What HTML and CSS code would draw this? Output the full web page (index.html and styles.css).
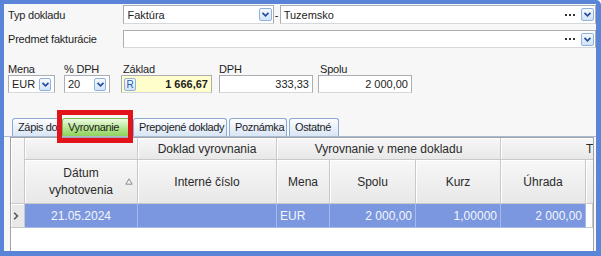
FILE: index.html
```html
<!DOCTYPE html>
<html lang="sk">
<head>
  <meta charset="UTF-8">
  <title>Doklad - Vyrovnanie</title>
  <link rel="stylesheet" href="styles.css">
</head>
<body>
  <div class="okno">
    <div class="riadok prvy">
      <span class="popis">Typ dokladu</span>
      <div class="pole typ">
        <span class="hodnota">Faktúra</span>
        <span class="rozbal"><svg width="9" height="7" viewBox="0 0 9 7"><path d="M1.5 1.8 L4.5 4.8 L7.5 1.8" fill="none" stroke="#22509e" stroke-width="1.7"/></svg></span>
      </div>
      <span class="pomlcka">-</span>
      <div class="pole miesto">
        <span class="hodnota">Tuzemsko</span>
        <span class="bodky"><i></i><i></i><i></i></span>
        <span class="rozbal"><svg width="9" height="7" viewBox="0 0 9 7"><path d="M1.5 1.8 L4.5 4.8 L7.5 1.8" fill="none" stroke="#22509e" stroke-width="1.7"/></svg></span>
      </div>
    </div>
    <div class="riadok druhy">
      <span class="popis">Predmet fakturácie</span>
      <div class="pole predmet">
        <span class="hodnota"></span>
        <span class="bodky"><i></i><i></i><i></i></span>
        <span class="rozbal"><svg width="9" height="7" viewBox="0 0 9 7"><path d="M1.5 1.8 L4.5 4.8 L7.5 1.8" fill="none" stroke="#22509e" stroke-width="1.7"/></svg></span>
      </div>
    </div>

    <div class="sumy">
      <div class="suma mena">
        <span class="nadpis">Mena</span>
        <div class="pole">
          <span class="hodnota">EUR</span>
          <span class="rozbal"><svg width="9" height="7" viewBox="0 0 9 7"><path d="M1.5 1.8 L4.5 4.8 L7.5 1.8" fill="none" stroke="#22509e" stroke-width="1.7"/></svg></span>
        </div>
      </div>
      <div class="suma sadzba">
        <span class="nadpis">% DPH</span>
        <div class="pole">
          <span class="hodnota">20</span>
          <span class="rozbal"><svg width="9" height="7" viewBox="0 0 9 7"><path d="M1.5 1.8 L4.5 4.8 L7.5 1.8" fill="none" stroke="#22509e" stroke-width="1.7"/></svg></span>
        </div>
      </div>
      <div class="suma zaklad">
        <span class="nadpis">Základ</span>
        <div class="pole zlte">
          <span class="tlacidlo-r">R</span>
          <span class="cislo tucne">1 666,67</span>
        </div>
      </div>
      <div class="suma dph">
        <span class="nadpis">DPH</span>
        <div class="pole"><span class="cislo">333,33</span></div>
      </div>
      <div class="suma spolu">
        <span class="nadpis">Spolu</span>
        <div class="pole"><span class="cislo">2 000,00</span></div>
      </div>
    </div>

    <div class="zalozky">
      <span class="zalozka z-zapis">Zápis do</span>
      <span class="zalozka z-vyr aktivna">Vyrovnanie</span>
      <span class="zalozka z-prep">Prepojené doklady</span>
      <span class="zalozka z-pozn">Poznámka</span>
      <span class="zalozka z-ost">Ostatné</span>
    </div>

    <div class="mriezka">
      <div class="bunka ind-hlav"></div>
      <div class="bunka pas"></div>
      <div class="bunka pas">Doklad vyrovnania</div>
      <div class="bunka pas pas-mena">Vyrovnanie v mene dokladu</div>
      <div class="bunka pas pas-dalsi">T</div>

      <div class="bunka stlpec datum">Dátum<br>vyhotovenia
        <svg class="zoradenie" width="8" height="7" viewBox="0 0 8 7"><path d="M4 0.8 L7.2 6.2 L0.8 6.2 Z" fill="none" stroke="#8c8c8c" stroke-width="1"/></svg>
      </div>
      <div class="bunka stlpec">Interné číslo</div>
      <div class="bunka stlpec">Mena</div>
      <div class="bunka stlpec">Spolu</div>
      <div class="bunka stlpec">Kurz</div>
      <div class="bunka stlpec">Úhrada</div>
      <div class="bunka stlpec kraj"></div>

      <div class="bunka ind-riadok"><svg width="6" height="8" viewBox="0 0 6 8"><path d="M1.2 0.8 L4.4 4 L1.2 7.2" fill="none" stroke="#555" stroke-width="1.6"/></svg></div>
      <div class="bunka data stred">21.05.2024</div>
      <div class="bunka data"></div>
      <div class="bunka data vlavo">EUR</div>
      <div class="bunka data vpravo">2 000,00</div>
      <div class="bunka data vpravo">1,00000</div>
      <div class="bunka data vpravo">2 000,00</div>
      <div class="bunka data-kraj"></div>
    </div>

    <div class="zvyraznenie"></div>
  </div>
</body>
</html>
```

FILE: styles.css
```css
* {
  box-sizing: border-box;
}

html, body {
  margin: 0;
  padding: 0;
}

body {
  width: 601px;
  height: 256px;
  overflow: hidden;
  font-family: "Liberation Sans", Arial, sans-serif;
  font-size: 11px;
  color: #1e1e1e;
}

.okno {
  position: relative;
  width: 601px;
  height: 256px;
  border: 4px solid #5a84d7;
  border-right-width: 5px;
  border-bottom-width: 5px;
  border-top-right-radius: 5px;
  background: #f7f7f7;
  display: flex;
  flex-direction: column;
  overflow: hidden;
}

/* horne riadky */
.riadok {
  display: flex;
  align-items: center;
  padding-left: 4px;
}

.riadok.prvy {
  height: 19px;
  margin-top: 1px;
}

.riadok.druhy {
  height: 18px;
  margin-top: 6px;
}

.popis {
  width: 116px;
  letter-spacing: -0.2px;
}

.pole {
  height: 100%;
  display: flex;
  align-items: center;
  background: #fff;
  border: 1px solid #abadb3;
  border-bottom-color: #d4d7dc;
  padding: 0 1px 0 3px;
}

.pole .hodnota {
  flex: 1;
  white-space: nowrap;
}

.pole.typ {
  width: 151px;
}

.pomlcka {
  width: 6px;
  text-align: center;
}

.pole.miesto {
  width: 318px;
}

.pole.predmet {
  width: 475px;
}

.rozbal {
  width: 13px;
  height: 13px;
  display: flex;
  align-items: center;
  justify-content: center;
  border: 1px solid #8fb2de;
  border-radius: 2px;
  background: linear-gradient(#f6f9fe, #d2e2f6);
}

.bodky {
  display: flex;
  gap: 2px;
  margin-right: 6px;
}

.bodky i {
  width: 2px;
  height: 2px;
  background: #333;
}

/* sumy */
.sumy {
  display: flex;
  margin-top: 16px;
  padding-left: 4px;
}

.suma {
  display: flex;
  flex-direction: column;
}

.nadpis {
  height: 11px;
  line-height: 11px;
  letter-spacing: -0.2px;
}

.suma .pole {
  height: 18px;
  padding-right: 3px;
}

.suma.mena { width: 47px; }
.suma.sadzba { width: 46px; margin-left: 9px; }
.suma.zaklad { width: 91px; margin-left: 11px; }
.suma.dph { width: 94px; margin-left: 7px; }
.suma.spolu { width: 94px; margin-left: 5px; }

.suma.zaklad .nadpis,
.suma.spolu .nadpis {
  padding-left: 2px;
}

.suma .rozbal {
  width: 12px;
  height: 13px;
}

.pole.zlte {
  background: #ffffcc;
  padding-left: 2px;
}

.tlacidlo-r {
  width: 12px;
  height: 13px;
  display: flex;
  align-items: center;
  justify-content: center;
  font-size: 10px;
  color: #2c5ca8;
  border: 1px solid #8fb2de;
  border-radius: 2px;
  background: linear-gradient(#f6f9fe, #d2e2f6);
}

.cislo {
  flex: 1;
  text-align: right;
}

.tucne {
  font-weight: bold;
}

/* zalozky */
.zalozky {
  display: flex;
  gap: 2px;
  height: 19px;
  margin-top: 25px;
  padding-left: 8px;
  border-bottom: 1px solid #a9bcd6;
}

.zalozka {
  height: 18px;
  line-height: 17px;
  padding-left: 5px;
  letter-spacing: -0.35px;
  white-space: nowrap;
  overflow: hidden;
  border: 1px solid #8eaad2;
  border-bottom: none;
  border-radius: 3px 3px 0 0;
  background: linear-gradient(#fcfdff, #d9e6f6);
}

.z-zapis { width: 48px; }
.z-vyr { width: 69px; }
.z-prep { width: 94px; }
.z-pozn { width: 58px; }
.z-ost { width: 50px; }

.zalozka.aktivna {
  border-color: #7fb95c;
  background: linear-gradient(#eefbe4, #b4e58f 55%, #8ed35a);
}

/* mriezka */
.mriezka {
  flex: 1;
  margin-left: 6px;
  width: 584px;
  display: grid;
  grid-template-columns: 14px 113px 139px 53px 86px 85px 85px 7px;
  grid-template-rows: 22px 44px 24px;
  align-content: start;
  background: #fff;
  border: 1px solid #a3a3a3;
  border-bottom: none;
  font-size: 12px;
  color: #2a2a2a;
}

.bunka {
  display: flex;
  align-items: center;
  justify-content: center;
  white-space: nowrap;
  overflow: hidden;
  border-right: 1px solid #c9c9c9;
  border-bottom: 1px solid #c9c9c9;
  background: linear-gradient(#f7f7f7, #e8e8e8);
  box-shadow: inset 1px 1px 0 #fff;
}

.ind-hlav {
  grid-row: span 2;
}

.pas-mena {
  grid-column: span 3;
}

.pas-dalsi {
  grid-column: span 2;
  justify-content: flex-start;
  padding-left: 85px;
  border-right: none;
}

.stlpec {
  text-align: center;
}

.datum {
  position: relative;
  line-height: 17px;
}

.zoradenie {
  position: absolute;
  right: 4px;
  top: 18px;
}

.kraj {
  border-right: none;
}

.ind-riadok {
  background: #e9e9e9;
  justify-content: flex-start;
  padding-left: 2px;
}

.data {
  background: #7b97df;
  color: #f4f6fb;
  border-right-color: #a8b9e6;
  border-bottom-color: #a8b9e6;
  box-shadow: none;
}

.data.vpravo {
  justify-content: flex-end;
  padding-right: 3px;
}

.data.vlavo {
  justify-content: flex-start;
  padding-left: 3px;
}

.data-kraj {
  background: #fff;
}

/* cervene oznacenie zalozky */
.zvyraznenie {
  position: absolute;
  left: 53px;
  top: 106px;
  width: 76px;
  height: 33px;
  border: 5px solid #e3131b;
}
```
